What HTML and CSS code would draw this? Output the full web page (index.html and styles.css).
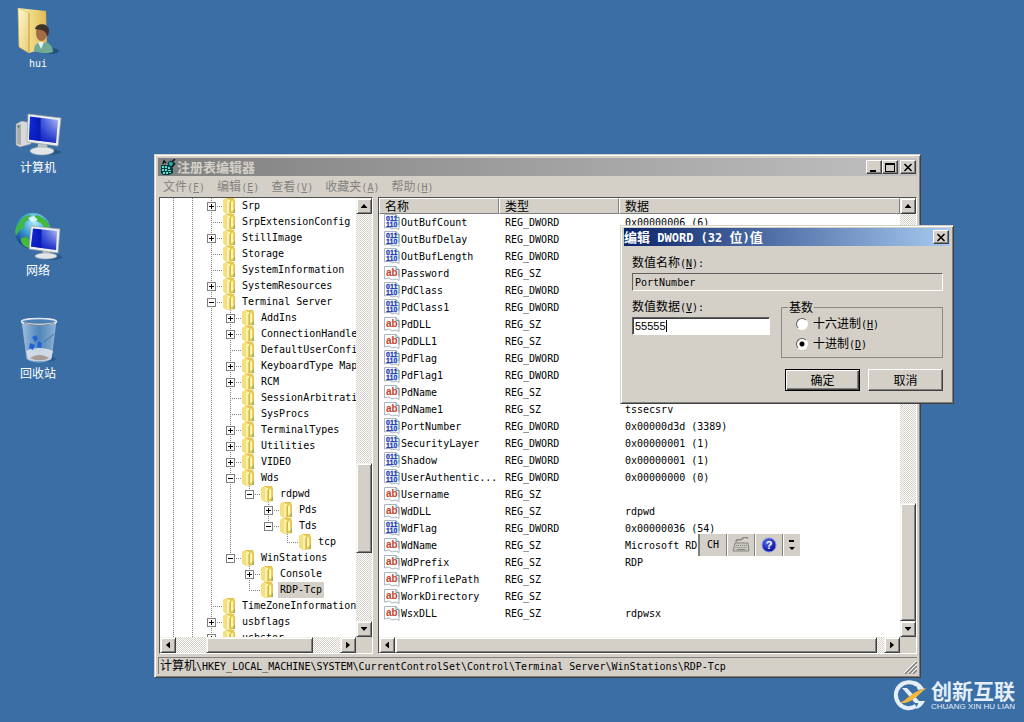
FILE: index.html
```html
<!DOCTYPE html>
<html lang="zh-CN">
<head>
<meta charset="utf-8">
<title>注册表编辑器</title>
<link rel="stylesheet" href="styles.css">
</head>
<body>
<svg class="defs" aria-hidden="true">
  <defs>
    <linearGradient id="gFolder" x1="0" x2="1"><stop offset="0" stop-color="#fdf3b4"/><stop offset="1" stop-color="#dfb94f"/></linearGradient>
    <linearGradient id="gFlap" x1="0" y1="0" x2="1" y2="1"><stop offset="0" stop-color="#fff8cf"/><stop offset="1" stop-color="#e9cd74"/></linearGradient>
    <linearGradient id="gScreen" x1="0" y1="0" x2="1" y2="0"><stop offset="0" stop-color="#0a2ce0"/><stop offset=".38" stop-color="#0514a4"/><stop offset=".42" stop-color="#3c55dd"/><stop offset="1" stop-color="#b9c6f4"/></linearGradient>
    <linearGradient id="gShade" x1="0" y1="0" x2="0" y2="1"><stop offset="0" stop-color="#2038d8" stop-opacity="0"/><stop offset="1" stop-color="#0414b8" stop-opacity=".85"/></linearGradient>
    <radialGradient id="gGlobe" cx=".55" cy=".25" r=".8"><stop offset="0" stop-color="#b5efff"/><stop offset=".45" stop-color="#3d9fd4"/><stop offset="1" stop-color="#122a86"/></radialGradient>
    <linearGradient id="gBin" x1="0" x2="1"><stop offset="0" stop-color="#c6dcf2" stop-opacity=".75"/><stop offset=".5" stop-color="#6b9fd2" stop-opacity=".5"/><stop offset="1" stop-color="#c8def2" stop-opacity=".6"/></linearGradient>
    <radialGradient id="gHelp" cx=".4" cy=".3" r=".7"><stop offset="0" stop-color="#5570e8"/><stop offset="1" stop-color="#0808a0"/></radialGradient>
  </defs>
  <symbol id="folder" viewBox="0 0 14 16">
    <path d="M1 2 5 0h7l1 3v12l-8 1-4-3z" fill="#e3c450"/>
    <path d="M1 2l4-2v16l-4-3z" fill="#f3e07e"/>
    <path d="M5 1l3 1v13l-3 1z" fill="#fbf2a8"/>
    <path d="M8 3l4-2v12l-4 2z" fill="#ecd05c"/>
    <path d="M9 4l2-1v9l-2 1z" fill="#fdf6b8"/>
    <path d="M8 4v11" stroke="#b89328" stroke-width=".8"/>
    <path d="M12 11h1v4h-2z" fill="#9db060"/>
  </symbol>
  <symbol id="sz" viewBox="0 0 16 16">
    <path d="M.5 1.500H12l3 3v11l-3-1.500-4 1-3-2-4.500 1z" fill="#fff" stroke="#a9b6bd"/>
    <path d="M12 1.500v3h3v7" fill="none" stroke="#6f9c9a"/>
    <text x="2" y="11" class="icon-ab">ab</text>
  </symbol>
  <symbol id="bin" viewBox="0 0 16 16">
    <path d="M.5 .500H12l3 3v12l-3-1.500-4 1-3-2-4.500 1z" fill="#fff" stroke="#a9b6bd"/>
    <path d="M12 .500v3h3v8" fill="none" stroke="#6f9c9a"/>
    <text x="2" y="7" class="icon-bin">011</text>
    <text x="2" y="13" class="icon-bin">110</text>
  </symbol>
</svg>

<main class="desktop">
  <nav class="shortcuts">
    <a class="shortcut" href="#hui">
      <svg viewBox="0 0 48 48"><ellipse cx="38" cy="43" rx="7" ry="3" fill="#24527f"/><path d="M4 0 32 3 33 40 15 45z" fill="url(#gFolder)"/><path d="M4 0 15 5v40L5 39z" fill="url(#gFlap)" stroke="#d9bd62" stroke-width=".6"/><path d="M15 5v39" stroke="#c9a545"/><path d="M20 43c0-7 4-9 9-9 6 0 10 4 10 10-6 2-14 1-19-1z" fill="#72aa96"/><path d="M24 34l3 7 3-7z" fill="#e9f2ef"/><ellipse cx="27.500" cy="25" rx="5.500" ry="8" fill="#a26c48"/><path d="M21 21c1-6 13-7 14 1 0 4-1 6-2 6-1-5-4-6-12-7z" fill="#41332c"/></svg>
      <span class="en">hui</span>
    </a>
    <a class="shortcut" href="#computer">
      <svg viewBox="0 0 48 48"><ellipse cx="34" cy="41" rx="13" ry="3" fill="#28578a"/><path d="M2 13 8 10l9 2v21L6 36l-4-2z" fill="#d6d8da" stroke="#8f969c" stroke-width=".6"/><path d="M3 14l4-1v21l-4-1z" fill="#a9adb0"/><circle cx="4.500" cy="15.500" r="1" fill="#2f7a32"/><path d="M24 33h9l1 7h-11z" fill="#bfc3c6"/><ellipse cx="28" cy="40" rx="12" ry="4" fill="#e3e6e8" stroke="#a0a6aa" stroke-width=".6"/><path d="M14 3 47 7 44 35 13 31z" fill="#eceeef" stroke="#9ba1a6" stroke-width=".7"/><path d="M16 5.500 44 9 42 32 15 28.500z" fill="url(#gScreen)"/><path d="M16 5.500 44 9 42 32 15 28.500z" fill="url(#gShade)"/></svg>
      <span class="zh">计算机</span>
    </a>
    <a class="shortcut" href="#network">
      <svg viewBox="0 0 48 48"><ellipse cx="38" cy="43" rx="10" ry="3" fill="#28578a"/><circle cx="19" cy="17" r="18" fill="url(#gGlobe)"/><path d="M5 8c4-6 9-7 12-7l-2 5-4 2-1 6-5 3-3 5c-2-5 0-10 3-14z" fill="#3fb54a"/><path d="M22 1c6 1 12 6 14 12l-5 1-4-5-5-2-3-3zM7 24l6-1 4 5-2 6c-5-1-9-5-8-10z" fill="#43b93a"/><path d="M14 4l6-2 4 4-6 2z" fill="#d9f5ff"/><path d="M29 36h7l1 6h-9z" fill="#bfc3c6"/><ellipse cx="32" cy="42" rx="11" ry="3" fill="#e3e6e8" stroke="#a0a6aa" stroke-width=".6"/><path d="M17 12 46 15 44 39 15 35z" fill="#eceeef" stroke="#9ba1a6" stroke-width=".7"/><path d="M19 14.500 43 17 42 36 17 32.500z" fill="url(#gScreen)"/><path d="M19 14.500 43 17 42 36 17 32.500z" fill="url(#gShade)"/></svg>
      <span class="zh">网络</span>
    </a>
    <a class="shortcut" href="#recycle">
      <svg viewBox="0 0 48 48"><ellipse cx="29" cy="42" rx="13" ry="3" fill="#28578a"/><path d="M8 4 13 42c6 4 18 4 24 0l5-38z" fill="url(#gBin)" stroke="#9bbfe0" stroke-width=".8"/><path d="M12 34c8-4 19-4 27 0l-2 8c-6 3-18 3-23 0z" fill="#dfe5ea" opacity=".85"/><path d="M16 41c6-4 13-4 19 0-5 3-14 3-19 0z" fill="#a69b95"/><path d="M18 20l4-2 2 4-3 3zM24 24l4 2-1 5-4-1zM16 26l5 2-2 5-4-2z" fill="#2263d4"/><path d="M40 17 30 25" stroke="#466fa0"/><ellipse cx="25" cy="4.500" rx="17.500" ry="3" fill="#4d7fb4" stroke="#dfe6ee" stroke-width="1.600"/><path d="M10 6c8 3 22 3 30 0" fill="none" stroke="#736c70" stroke-width=".8"/></svg>
      <span class="zh">回收站</span>
    </a>
  </nav>

  <section class="window regedit" aria-label="注册表编辑器">
    <header class="titlebar inactive">
      <svg class="app-icon" viewBox="0 0 16 16"><path d="M1 6h7l5 3v5l-4 2H3l-2-2z" fill="#063c3c"/><path d="M2 7h2v2H2zM5 7h2v2H5zM8 8h2v2H8zM2 10h2v2H2zM5 10h2v2H5zM8 11h3v1H8zM3 13h2v2H3zM6 13h2v2H6zM9 13h2v1H9z" fill="#5ce0e0"/><path d="M8 4l2-2 3 1 1 3-2 2-3-1z" fill="#1ba5a5" stroke="#052828"/><path d="M3 5l1-3 2 2M12 3l3-3M12 8l3-4" fill="none" stroke="#001818" stroke-width="1.500"/></svg>
      <h1 class="title">注册表编辑器</h1>
      <button class="cap" aria-label="最小化"><svg viewBox="0 0 10 9"><path d="M1 7h6v2H1z"/></svg></button>
      <button class="cap" aria-label="最大化"><svg viewBox="0 0 10 9"><path d="M0 0h10v9H0zM1 2v6h8V2z" fill-rule="evenodd"/></svg></button>
      <button class="cap close" aria-label="关闭"><svg viewBox="0 0 10 9"><path d="M1.500 1 8.500 8M8.500 1 1.500 8" stroke="#000" stroke-width="1.600"/></svg></button>
    </header>
    <nav class="menubar">
      <button><span class="zh">文件</span>(<u>F</u>)</button>
      <button><span class="zh">编辑</span>(<u>E</u>)</button>
      <button><span class="zh">查看</span>(<u>V</u>)</button>
      <button><span class="zh">收藏夹</span>(<u>A</u>)</button>
      <button><span class="zh">帮助</span>(<u>H</u>)</button>
    </nav>

    <div class="panes">
      <div class="pane tree-pane">
        <div class="view tree-view">
          <ul class="tree root">
            <li><div class="row"><button class="box plus" aria-label="展开"></button><svg class="fi"><use href="#folder"/></svg><span>Srp</span></div></li>
            <li><div class="row leaf"><svg class="fi"><use href="#folder"/></svg><span>SrpExtensionConfig</span></div></li>
            <li><div class="row"><button class="box plus" aria-label="展开"></button><svg class="fi"><use href="#folder"/></svg><span>StillImage</span></div></li>
            <li><div class="row leaf"><svg class="fi"><use href="#folder"/></svg><span>Storage</span></div></li>
            <li><div class="row leaf"><svg class="fi"><use href="#folder"/></svg><span>SystemInformation</span></div></li>
            <li><div class="row"><button class="box plus" aria-label="展开"></button><svg class="fi"><use href="#folder"/></svg><span>SystemResources</span></div></li>
            <li><div class="row"><button class="box" aria-label="折叠"></button><svg class="fi"><use href="#folder"/></svg><span>Terminal Server</span></div>
              <ul class="tree">
                <li><div class="row"><button class="box plus" aria-label="展开"></button><svg class="fi"><use href="#folder"/></svg><span>AddIns</span></div></li>
                <li><div class="row"><button class="box plus" aria-label="展开"></button><svg class="fi"><use href="#folder"/></svg><span>ConnectionHandler</span></div></li>
                <li><div class="row leaf"><svg class="fi"><use href="#folder"/></svg><span>DefaultUserConfig</span></div></li>
                <li><div class="row"><button class="box plus" aria-label="展开"></button><svg class="fi"><use href="#folder"/></svg><span>KeyboardType Mapping</span></div></li>
                <li><div class="row"><button class="box plus" aria-label="展开"></button><svg class="fi"><use href="#folder"/></svg><span>RCM</span></div></li>
                <li><div class="row leaf"><svg class="fi"><use href="#folder"/></svg><span>SessionArbitration</span></div></li>
                <li><div class="row leaf"><svg class="fi"><use href="#folder"/></svg><span>SysProcs</span></div></li>
                <li><div class="row"><button class="box plus" aria-label="展开"></button><svg class="fi"><use href="#folder"/></svg><span>TerminalTypes</span></div></li>
                <li><div class="row"><button class="box plus" aria-label="展开"></button><svg class="fi"><use href="#folder"/></svg><span>Utilities</span></div></li>
                <li><div class="row"><button class="box plus" aria-label="展开"></button><svg class="fi"><use href="#folder"/></svg><span>VIDEO</span></div></li>
                <li><div class="row"><button class="box" aria-label="折叠"></button><svg class="fi"><use href="#folder"/></svg><span>Wds</span></div>
                  <ul class="tree">
                    <li><div class="row"><button class="box" aria-label="折叠"></button><svg class="fi"><use href="#folder"/></svg><span>rdpwd</span></div>
                      <ul class="tree">
                        <li><div class="row"><button class="box plus" aria-label="展开"></button><svg class="fi"><use href="#folder"/></svg><span>Pds</span></div></li>
                        <li><div class="row"><button class="box" aria-label="折叠"></button><svg class="fi"><use href="#folder"/></svg><span>Tds</span></div>
                          <ul class="tree">
                            <li><div class="row leaf"><svg class="fi"><use href="#folder"/></svg><span>tcp</span></div></li>
                          </ul>
                        </li>
                      </ul>
                    </li>
                  </ul>
                </li>
                <li><div class="row"><button class="box" aria-label="折叠"></button><svg class="fi"><use href="#folder"/></svg><span>WinStations</span></div>
                  <ul class="tree">
                    <li><div class="row"><button class="box plus" aria-label="展开"></button><svg class="fi"><use href="#folder"/></svg><span>Console</span></div></li>
                    <li><div class="row leaf"><svg class="fi"><use href="#folder"/></svg><span class="selected">RDP-Tcp</span></div></li>
                  </ul>
                </li>
              </ul>
            </li>
            <li><div class="row leaf"><svg class="fi"><use href="#folder"/></svg><span>TimeZoneInformation</span></div></li>
            <li><div class="row"><button class="box plus" aria-label="展开"></button><svg class="fi"><use href="#folder"/></svg><span>usbflags</span></div></li>
            <li><div class="row"><button class="box plus" aria-label="展开"></button><svg class="fi"><use href="#folder"/></svg><span>usbstor</span></div></li>
            <li><div class="row"></div></li>
          </ul>
        </div>
        <div class="vscroll"><button class="arrow up" aria-label="向上"></button><div class="track"><div class="thumb tree-v"></div></div><button class="arrow down" aria-label="向下"></button></div>
        <div class="hscroll"><button class="arrow left" aria-label="向左"></button><div class="track"><div class="thumb tree-h"></div></div><button class="arrow right" aria-label="向右"></button></div>
      </div>

      <div class="pane list-pane">
        <div class="view">
          <table class="values">
            <thead><tr><th class="c-name">名称</th><th class="c-type">类型</th><th>数据</th></tr></thead>
            <tbody>
              <tr><td><svg class="vi"><use href="#bin"/></svg>OutBufCount</td><td>REG_DWORD</td><td>0x00000006 (6)</td></tr>
              <tr><td><svg class="vi"><use href="#bin"/></svg>OutBufDelay</td><td>REG_DWORD</td><td></td></tr>
              <tr><td><svg class="vi"><use href="#bin"/></svg>OutBufLength</td><td>REG_DWORD</td><td></td></tr>
              <tr><td><svg class="vi"><use href="#sz"/></svg>Password</td><td>REG_SZ</td><td></td></tr>
              <tr><td><svg class="vi"><use href="#bin"/></svg>PdClass</td><td>REG_DWORD</td><td></td></tr>
              <tr><td><svg class="vi"><use href="#bin"/></svg>PdClass1</td><td>REG_DWORD</td><td></td></tr>
              <tr><td><svg class="vi"><use href="#sz"/></svg>PdDLL</td><td>REG_SZ</td><td></td></tr>
              <tr><td><svg class="vi"><use href="#sz"/></svg>PdDLL1</td><td>REG_SZ</td><td></td></tr>
              <tr><td><svg class="vi"><use href="#bin"/></svg>PdFlag</td><td>REG_DWORD</td><td></td></tr>
              <tr><td><svg class="vi"><use href="#bin"/></svg>PdFlag1</td><td>REG_DWORD</td><td></td></tr>
              <tr><td><svg class="vi"><use href="#sz"/></svg>PdName</td><td>REG_SZ</td><td></td></tr>
              <tr><td><svg class="vi"><use href="#sz"/></svg>PdName1</td><td>REG_SZ</td><td>tssecsrv</td></tr>
              <tr><td><svg class="vi"><use href="#bin"/></svg>PortNumber</td><td>REG_DWORD</td><td>0x00000d3d (3389)</td></tr>
              <tr><td><svg class="vi"><use href="#bin"/></svg>SecurityLayer</td><td>REG_DWORD</td><td>0x00000001 (1)</td></tr>
              <tr><td><svg class="vi"><use href="#bin"/></svg>Shadow</td><td>REG_DWORD</td><td>0x00000001 (1)</td></tr>
              <tr><td><svg class="vi"><use href="#bin"/></svg>UserAuthentic...</td><td>REG_DWORD</td><td>0x00000000 (0)</td></tr>
              <tr><td><svg class="vi"><use href="#sz"/></svg>Username</td><td>REG_SZ</td><td></td></tr>
              <tr><td><svg class="vi"><use href="#sz"/></svg>WdDLL</td><td>REG_SZ</td><td>rdpwd</td></tr>
              <tr><td><svg class="vi"><use href="#bin"/></svg>WdFlag</td><td>REG_DWORD</td><td>0x00000036 (54)</td></tr>
              <tr><td><svg class="vi"><use href="#sz"/></svg>WdName</td><td>REG_SZ</td><td>Microsoft RDP</td></tr>
              <tr><td><svg class="vi"><use href="#sz"/></svg>WdPrefix</td><td>REG_SZ</td><td>RDP</td></tr>
              <tr><td><svg class="vi"><use href="#sz"/></svg>WFProfilePath</td><td>REG_SZ</td><td></td></tr>
              <tr><td><svg class="vi"><use href="#sz"/></svg>WorkDirectory</td><td>REG_SZ</td><td></td></tr>
              <tr><td><svg class="vi"><use href="#sz"/></svg>WsxDLL</td><td>REG_SZ</td><td>rdpwsx</td></tr>
            </tbody>
          </table>
        </div>
        <div class="vscroll"><button class="arrow up" aria-label="向上"></button><div class="track"><div class="thumb list-v"></div></div><button class="arrow down" aria-label="向下"></button></div>
        <div class="hscroll"><button class="arrow left" aria-label="向左"></button><div class="track"><div class="thumb list-h"></div></div><button class="arrow right" aria-label="向右"></button></div>
      </div>
    </div>

    <footer class="status">
      <span><span class="zh">计算机</span>\HKEY_LOCAL_MACHINE\SYSTEM\CurrentControlSet\Control\Terminal Server\WinStations\RDP-Tcp</span>
      <svg class="grip" viewBox="0 0 13 13"><path d="M1 13 13 1M5 13l8-8M9 13l4-4" stroke="#808080" stroke-width="1.500"/><path d="M0 12 12 0M4 12l9-9M8 12l5-5" stroke="#fff"/></svg>
    </footer>
  </section>

  <form class="window dialog" role="dialog" aria-label="编辑 DWORD (32 位)值">
    <header class="titlebar active">
      <h2 class="title">编辑<span class="lat"> DWORD (32 </span>位<span class="lat">)</span>值</h2>
      <button type="button" class="cap close" aria-label="关闭"><svg viewBox="0 0 10 9"><path d="M1.500 1 8.500 8M8.500 1 1.500 8" stroke="#000" stroke-width="1.600"/></svg></button>
    </header>
    <div class="body">
      <div class="field">
        <label for="vname"><span class="zh">数值名称</span>(<u>N</u>):</label>
        <input id="vname" class="text readonly" type="text" value="PortNumber" readonly>
      </div>
      <div class="split">
        <div class="field">
          <label for="vdata"><span class="zh">数值数据</span>(<u>V</u>):</label>
          <div class="text data"><input id="vdata" type="text" value="55555" size="5"><i class="caret"></i></div>
        </div>
        <fieldset class="base">
          <legend class="zh">基数</legend>
          <label><input type="radio" name="base"><span><span class="zh">十六进制</span>(<u>H</u>)</span></label>
          <label><input type="radio" name="base" checked><span><span class="zh">十进制</span>(<u>D</u>)</span></label>
        </fieldset>
      </div>
      <div class="actions">
        <button type="button" class="btn default">确定</button>
        <button type="button" class="btn">取消</button>
      </div>
    </div>
  </form>

  <div class="langbar">
    <button class="ch">CH</button>
    <button class="seg" aria-label="键盘"><svg viewBox="0 0 18 16"><path d="M4 5c0-4 4-1 6-3s3-2 6-1" fill="none" stroke="#858585" stroke-width="1.500"/><path d="M3 6h13l1 8H1z" fill="#c9c6be" stroke="#858585"/><path d="M4 8.500h11M3.500 10.500h12" stroke="#858585" stroke-dasharray="1 1"/><path d="M5 12.500h8" stroke="#858585"/></svg></button>
    <button class="seg" aria-label="帮助"><svg viewBox="0 0 18 16"><circle cx="9" cy="8" r="7" fill="url(#gHelp)" stroke="#8795dc"/><text x="9" y="12" class="icon-q">?</text></svg></button>
    <button class="opts" aria-label="选项"><svg viewBox="0 0 8 14"><path d="M1 2h5v2H1zM1 9h6l-3 3z"/></svg></button>
  </div>

  <aside class="brand">
    <svg viewBox="0 0 36 32"><path d="M25 6A13 13 0 1 0 24 27" fill="none" stroke="#e4eef8" stroke-width="4"/><path d="M22 2c5 1 8 4 10 8l-6 1M27 22l6 0c-2 4-5 7-9 8" fill="#e4eef8"/><path d="M10 9h5l14 15h-6z" fill="#e4eef8"/><path d="M8 24C16 20 20 12 35 9 27 14 23 22 13 24z" fill="#f0b73c"/></svg>
    <div class="brand-text"><strong>创新互联</strong><small>CHUANG XIN HU LIAN</small></div>
  </aside>
</main>
</body>
</html>
```
FILE: styles.css
```css
:root {
  --face: #d4d0c8;
  --mono: "DejaVu Sans Mono", "Liberation Mono", "Noto Sans CJK SC", monospace;
  --cjk: "Noto Sans CJK SC", "Noto Sans", sans-serif;
}
* { box-sizing: border-box; }
body { margin: 0; background: #3a6ea5; color: #000; font: 10px/16px var(--mono); }
button, input { font: inherit; color: inherit; margin: 0; padding: 0; border: 0; border-radius: 0; background: none; }
button:focus, input:focus { outline: none; }
.defs { position: absolute; width: 0; height: 0; }
.zh { font-family: var(--cjk); font-size: 12px; line-height: 16px; font-weight: 400; }
.icon-ab { font: bold 10px "Liberation Sans", sans-serif; fill: #c8402c; }
.icon-bin { font: bold 7px "Liberation Sans", sans-serif; fill: #2040b8; stroke: #2040b8; stroke-width: .3px; }
.icon-q { font: bold 11px "Liberation Sans", sans-serif; fill: #fff; text-anchor: middle; }

.desktop { position: relative; min-height: 100vh; overflow: hidden; }
.shortcuts { display: flex; flex-direction: column; gap: 39px; width: 76px; padding-top: 8px; }
.shortcut { display: flex; flex-direction: column; align-items: center; color: #fff; text-decoration: none; }
.shortcut svg { width: 48px; height: 48px; overflow: visible; }
.shortcut .en { line-height: 16px; }

/* window frames */
.window {
  position: absolute; display: flex; flex-direction: column; padding: 3px; background: var(--face);
  border: 1px solid; border-color: #d4d0c8 #404040 #404040 #d4d0c8;
  box-shadow: inset 1px 1px #fff, inset -1px -1px #808080;
}
.regedit { inset: 154px 103px 44px 154px; }
.dialog { left: 620px; top: 225px; width: 334px; padding-top: 2px; }
.titlebar { display: flex; align-items: center; height: 18px; padding: 0 1px 0 2px; }
.inactive { background: linear-gradient(90deg, #808080, #c0c0c0); color: #d4d0c8; }
.active { background: linear-gradient(90deg, #0a246a, #a6caf0); color: #fff; padding-left: 0; }
.title { flex: 1; margin: 0; font: bold 13px/18px var(--cjk); white-space: pre; }
.title .lat { font: bold 12px/18px var(--mono); }
.app-icon { width: 16px; height: 16px; margin-right: 1px; }
.cap {
  display: flex; align-items: center; justify-content: center; width: 16px; height: 14px; background: var(--face);
  border: 1px solid; border-color: #fff #404040 #404040 #fff; box-shadow: inset -1px -1px #808080;
}
.cap svg { width: 10px; height: 9px; }
.cap.close { margin-left: 2px; }

.menubar { display: flex; align-items: center; height: 20px; padding: 2px 0 0; color: #84827e; }
.menubar button { display: block; padding: 0 7px 0 5px; line-height: 16px; white-space: nowrap; }

/* panes */
.panes { flex: 1; min-height: 0; display: flex; gap: 5px; margin: 1px 0 3px 1px; }
.pane {
  display: grid; grid-template: minmax(0, 1fr) 16px / minmax(0, 1fr) 16px; background: var(--face);
  border: 1px solid; border-color: #505050 #fff #fff #505050; min-width: 0;
}
.tree-pane { flex: 0 0 214px; }
.list-pane { flex: 1; }
.view { overflow: hidden; background: #fff; }
.vscroll { display: flex; flex-direction: column; min-height: 0; }
.hscroll { display: flex; min-width: 0; }
.track { flex: 1; display: flex; min-width: 0; min-height: 0; background: repeating-conic-gradient(#fff 0 25%, #d4d0c8 0 50%) 0 0 / 2px 2px; }
.vscroll .track { flex-direction: column; }
.arrow, .thumb {
  background: var(--face); border: 1px solid; border-color: #f4f2ee #404040 #404040 #f4f2ee;
  box-shadow: inset 1px 1px #fff, inset -1px -1px #808080;
}
.arrow { flex: 0 0 16px; width: 16px; height: 16px; display: grid; place-items: center; }
.arrow::before { content: ""; width: 7px; height: 4px; background: #000; clip-path: polygon(50% 0, 100% 100%, 0 100%); }
.down::before { clip-path: polygon(0 0, 100% 0, 50% 100%); }
.left::before { width: 4px; height: 7px; clip-path: polygon(0 50%, 100% 0, 100% 100%); }
.right::before { width: 4px; height: 7px; clip-path: polygon(0 0, 100% 50%, 0 100%); }
.tree-v { height: 22%; margin-top: auto; margin-bottom: 68px; }
.tree-h { width: 65%; margin-left: 30px; }
.list-v { height: 29%; margin-top: auto; }
.list-h { flex: 1; margin-right: 7px; }

/* registry tree: each item paints its own dotted guide */
.tree { list-style: none; margin: 0; padding: 0 0 0 19px; }
.root {
  padding-left: 42px;
  background: repeating-linear-gradient(#808080 0 1px, #fff 1px 2px) 13px 0 / 1px 100% no-repeat,
    repeating-linear-gradient(#808080 0 1px, #fff 1px 2px) 32px 0 / 1px 100% no-repeat;
}
.tree li { background: repeating-linear-gradient(#808080 0 1px, #fff 1px 2px) 9px 0 / 1px 100% no-repeat; }
.tree li:last-child { background-size: 1px 8px; }
.row { display: flex; align-items: center; height: 16px; white-space: pre; background: repeating-linear-gradient(90deg, #808080 0 1px, #fff 1px 2px) 9px 8px / 11px 1px no-repeat; }
.row.leaf { padding-left: 19px; }
.row span { padding: 0 2px; }
.row .selected { background: var(--face); }
.fi { flex: 0 0 14px; width: 14px; height: 16px; margin: 0 4px 0 1px; }
.box {
  flex: 0 0 9px; height: 9px; margin: 0 5px; border: 1px solid #808080;
  background: linear-gradient(#000, #000) center / 5px 1px no-repeat, #fff;
}
.box.plus { background: linear-gradient(#000, #000) center / 5px 1px no-repeat, linear-gradient(#000, #000) center / 1px 5px no-repeat, #fff; }

/* value list */
.values { width: 100%; table-layout: fixed; border-collapse: separate; border-spacing: 0; }
.values th {
  height: 16px; padding: 0 5px; text-align: left; font: 12px/14px var(--cjk); background: var(--face);
  border: solid; border-width: 1px; border-color: #fff #808080 #808080 #fff;
}
.c-name, .c-type { width: 120px; }
.values td { height: 17px; padding: 0 0 0 6px; line-height: 17px; white-space: nowrap; overflow: hidden; }
.values td:first-child { padding-left: 5px; }
.vi { width: 16px; height: 16px; margin-right: 1px; vertical-align: top; }

.status {
  display: flex; justify-content: space-between; align-items: center; height: 17px; padding-left: 1px; white-space: nowrap; overflow: hidden;
  border-top: 1px solid #808080; border-left: 1px solid #808080;
}
.grip { width: 13px; height: 13px; align-self: flex-end; }

/* dialog */
.body { padding: 8px 7px 9px 8px; }
.field { display: flex; flex-direction: column; gap: 3px; }
.field label { height: 16px; }
.text { height: 18px; padding: 0 2px; background: #fff; border: 1px solid; border-color: #606060 #fff #fff #606060; box-shadow: inset 1px 1px #404040; }
.readonly { background: var(--face); box-shadow: none; }
.split { display: grid; grid-template-columns: 138fr 162fr; gap: 11px; padding-top: 7px; }
.data { display: flex; align-items: center; font: 11px/14px "Liberation Sans", sans-serif; }
.data input { width: 31px; }
.caret { width: 1px; height: 12px; background: #000; }
.base { margin: 2px 0 0; padding: 0 0 3px 14px; min-width: 0; border: 1px solid #8a8884; }
.base legend { margin-left: -8px; padding: 0 1px; line-height: 14px; }
.base label { display: flex; align-items: center; gap: 5px; height: 20px; }
.base input {
  appearance: none; width: 12px; height: 12px; border: 1px solid; border-color: #606060 #fff #fff #606060; border-radius: 50%;
  background: #fff;
}
.base input:checked { background: radial-gradient(circle, #000 2px, #fff 3px); }
.actions { display: flex; justify-content: flex-end; gap: 8px; padding-top: 11px; }
.btn {
  width: 75px; height: 22px; font: 12px/18px var(--cjk); background: var(--face);
  border: 1px solid; border-color: #fff #404040 #404040 #fff; box-shadow: inset -1px -1px #808080;
}
.btn.default { border-color: #000; box-shadow: inset 1px 1px #fff, inset -1px -1px #404040, inset -2px -2px #808080; }

/* input-method bar */
.langbar { position: absolute; left: 697px; top: 534px; display: flex; height: 22px; background: var(--face); border-left: 1px solid #fff; }
.langbar button { display: grid; place-items: center; border-right: 1px solid #808080; box-shadow: 1px 0 #fff; }
.langbar .ch { width: 29px; border-left: 2px solid #808080; }
.langbar .seg { width: 28px; }
.langbar .seg svg { width: 18px; height: 16px; }
.langbar .opts { width: 17px; border: 0; box-shadow: none; }
.opts svg { width: 8px; height: 14px; }

.brand { position: absolute; right: 9px; bottom: 11px; display: flex; align-items: center; gap: 3px; color: #e4eef8; }
.brand svg { width: 36px; height: 32px; }
.brand-text { display: flex; flex-direction: column; gap: 2px; }
.brand strong { font: bold 21px/20px var(--cjk); }
.brand small { font: 8px/9px "Liberation Sans", sans-serif; white-space: nowrap; }
```
